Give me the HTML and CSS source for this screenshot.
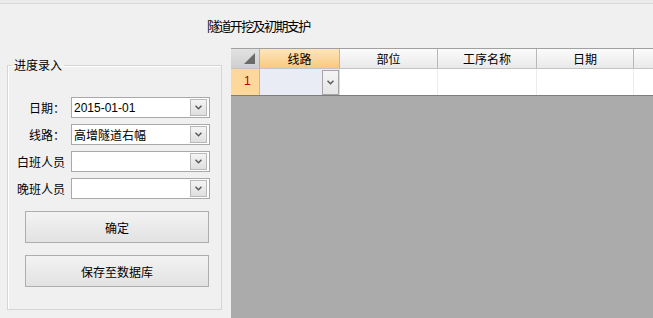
FILE: index.html
```html
<!DOCTYPE html>
<html lang="zh-CN">
<head>
    <meta charset="UTF-8">
    <title>隧道开挖及初期支护</title>
    <link rel="stylesheet" href="styles.css">
</head>
<body>
    <div class="topbar"></div>
    <div class="title">隧道开挖及初期支护</div>

    <div class="main">
        <div class="side">
            <fieldset class="group">
                <legend>进度录入</legend>
                <div class="form-row">
                    <label>日期：</label>
                    <div class="combo"><span class="latin">2015-01-01</span><i class="drop"><svg width="7" height="5" viewBox="0 0 7 5"><polyline points="0.5,0.8 3.5,3.8 6.5,0.8" fill="none" stroke="#5a5a5a" stroke-width="1.5"/></svg></i></div>
                </div>
                <div class="form-row">
                    <label>线路：</label>
                    <div class="combo"><span>高增隧道右幅</span><i class="drop"><svg width="7" height="5" viewBox="0 0 7 5"><polyline points="0.5,0.8 3.5,3.8 6.5,0.8" fill="none" stroke="#5a5a5a" stroke-width="1.5"/></svg></i></div>
                </div>
                <div class="form-row">
                    <label>白班人员</label>
                    <div class="combo"><span></span><i class="drop"><svg width="7" height="5" viewBox="0 0 7 5"><polyline points="0.5,0.8 3.5,3.8 6.5,0.8" fill="none" stroke="#5a5a5a" stroke-width="1.5"/></svg></i></div>
                </div>
                <div class="form-row">
                    <label>晚班人员</label>
                    <div class="combo"><span></span><i class="drop"><svg width="7" height="5" viewBox="0 0 7 5"><polyline points="0.5,0.8 3.5,3.8 6.5,0.8" fill="none" stroke="#5a5a5a" stroke-width="1.5"/></svg></i></div>
                </div>
                <button class="btn first">确定</button>
                <button class="btn">保存至数据库</button>
            </fieldset>
        </div>

        <div class="grid">
            <div class="grid-head">
                <div class="corner"><svg width="11" height="11" viewBox="0 0 11 11"><polygon points="11,0 11,11 0,11" fill="#6b6b6b"/></svg></div>
                <div class="hcell c1 active">线路</div>
                <div class="hcell c2">部位</div>
                <div class="hcell c3">工序名称</div>
                <div class="hcell c4">日期</div>
                <div class="hcell c5">开始时间</div>
            </div>
            <div class="grid-row">
                <div class="rowhead">1</div>
                <div class="cell c1 selected"><i class="drop cell-drop"><svg width="7" height="5" viewBox="0 0 7 5"><polyline points="0.5,0.8 3.5,3.8 6.5,0.8" fill="none" stroke="#5a5a5a" stroke-width="1.5"/></svg></i></div>
                <div class="cell c2"></div>
                <div class="cell c3"></div>
                <div class="cell c4"></div>
                <div class="cell c5"></div>
            </div>
        </div>
    </div>
</body>
</html>
```

FILE: styles.css
```css
body {
    margin: 0;
    height: 318px;
    overflow: hidden;
    background: #f0f0f0;
    color: #000;
    font-family: "Noto Sans CJK SC", "Liberation Sans", sans-serif;
    font-size: 12px;
}
.topbar {
    height: 3px;
    background: #ebebeb;
    border-bottom: 1px solid #d9d9d9;
}
.title {
    height: 20px;
    padding: 12px 0 12px 207px;
    line-height: 20px;
    font-size: 13px;
    letter-spacing: -1.6px;
}
.main {
    display: flex;
    height: 270px;
}
.side {
    flex: none;
    width: 231px;
}
.group {
    box-sizing: border-box;
    width: 215px;
    margin: 10px 0 0 7px;
    padding: 25px 0 22px 0;
    border: 1px solid #d5d5d5;
    box-shadow: inset 1px 1px 0 #fff;
    min-inline-size: 0;
}
.group legend {
    margin-left: 4px;
    padding: 0 2px;
    line-height: 14px;
}
.form-row {
    display: flex;
    align-items: center;
    height: 21px;
    margin-bottom: 6px;
}
.form-row label {
    width: 57px;
    margin-right: 6px;
    text-align: right;
    white-space: nowrap;
}
.combo {
    box-sizing: border-box;
    display: flex;
    align-items: center;
    width: 139px;
    height: 21px;
    padding-left: 2px;
    background: #fff;
    border: 1px solid #a9a9a9;
}
.combo span {
    flex: 1;
    line-height: 18px;
}
.latin {
    font-family: "Liberation Sans", sans-serif;
}
.drop {
    box-sizing: border-box;
    display: flex;
    align-items: center;
    justify-content: center;
    width: 17px;
    height: 17px;
    margin-right: 2px;
    border: 1px solid #b9b9b9;
    background: linear-gradient(#f4f4f4, #dfdfdf);
}
.btn {
    display: block;
    box-sizing: border-box;
    width: 184px;
    height: 32px;
    margin: 0 0 12px 17px;
    padding: 0;
    border: 1px solid #adadad;
    background: linear-gradient(#f3f3f3, #e2e2e2);
    font-family: inherit;
    font-size: 12px;
    color: #000;
}
.btn.first {
    margin-top: 12px;
}
.btn:last-child {
    margin-bottom: 0;
}
.grid {
    flex: 1;
    background: #ababab;
    overflow: hidden;
}
.grid-head,
.grid-row {
    display: flex;
    width: 700px;
}
.grid-head {
    height: 21px;
    box-sizing: border-box;
    border-top: 1px solid #a0a0a0;
    border-bottom: 1px solid #c4c4c4;
}
.grid-row {
    box-sizing: border-box;
    height: 27px;
    border-bottom: 1px solid #7d7d7d;
}
.corner,
.rowhead {
    box-sizing: border-box;
    width: 29px;
    flex: none;
}
.corner {
    display: flex;
    align-items: flex-end;
    justify-content: flex-end;
    padding: 0 4px 4px 0;
    background: linear-gradient(#e2e2e2, #cfcfcf);
    border-right: 1px solid #b0b0b0;
}
.hcell,
.cell {
    box-sizing: border-box;
    flex: none;
}
.hcell {
    line-height: 19px;
    text-align: center;
    white-space: nowrap;
    background: linear-gradient(#fbfbfb, #e9e9e9);
    border-right: 1px solid #b8b8b8;
}
.hcell.active {
    background: linear-gradient(#fde6bc, #f8c97f);
    border-right-color: #e8b163;
}
.c1 { width: 80px; }
.c2 { width: 98px; }
.c3 { width: 99px; }
.c4 { width: 97px; }
.c5 { width: 120px; }
.rowhead {
    padding-left: 13px;
    line-height: 24px;
    color: #b00000;
    font-family: "Liberation Sans", sans-serif;
    background: #fdd89a;
    border-right: 1px solid #e8b266;
}
.cell {
    background: #fff;
    border-right: 1px solid #ececec;
}
.cell.selected {
    display: flex;
    justify-content: flex-end;
    align-items: center;
    background: #e9ecf5;
    border-right-color: #dcdcdc;
}
.cell-drop {
    width: 17px;
    height: 25px;
    margin-right: 0;
    background: linear-gradient(#f4f4f4, #e6e6e6);
    border-color: #a6a6a6;
}
```
